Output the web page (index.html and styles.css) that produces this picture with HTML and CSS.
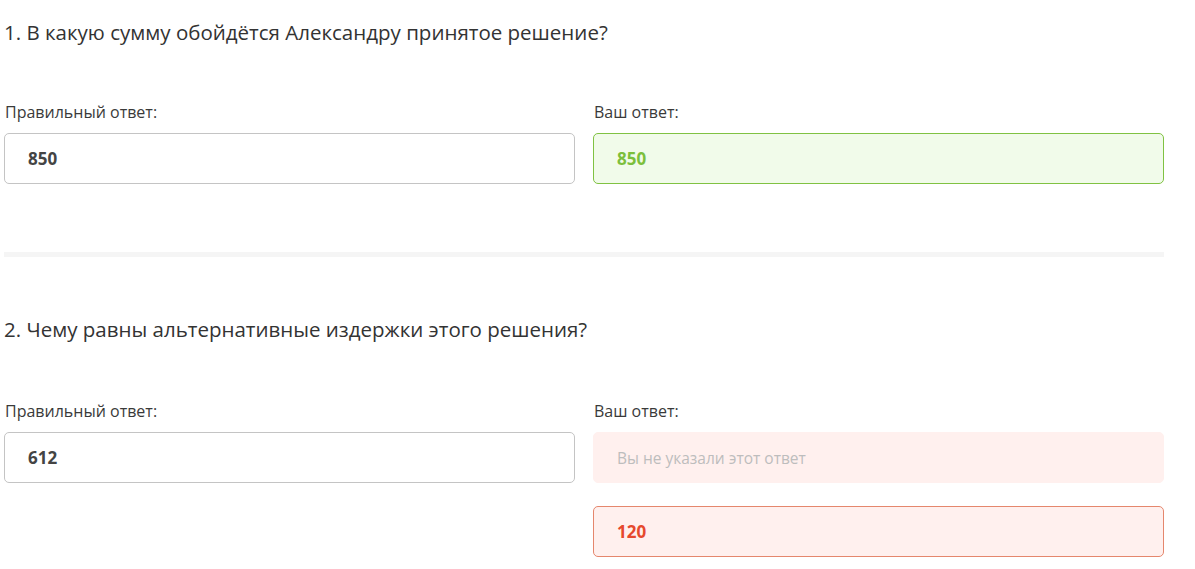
FILE: index.html
```html
<!DOCTYPE html>
<html lang="ru">
<head>
<meta charset="utf-8">
<title>Результаты</title>
<link rel="stylesheet" href="styles.css">
</head>
<body>
<div class="results">
  <section class="question">
    <h2 class="question-title">1. В какую сумму обойдётся Александру принятое решение?</h2>
    <div class="answers">
      <div class="answer-col">
        <div class="answer-label">Правильный ответ:</div>
        <div class="answer-box">850</div>
      </div>
      <div class="answer-col">
        <div class="answer-label">Ваш ответ:</div>
        <div class="answer-box is-correct">850</div>
      </div>
    </div>
  </section>
  <div class="divider"></div>
  <section class="question">
    <h2 class="question-title">2. Чему равны альтернативные издержки этого решения?</h2>
    <div class="answers">
      <div class="answer-col">
        <div class="answer-label">Правильный ответ:</div>
        <div class="answer-box">612</div>
      </div>
      <div class="answer-col">
        <div class="answer-label">Ваш ответ:</div>
        <div class="answer-box is-missing">Вы не указали этот ответ</div>
        <div class="answer-box is-wrong">120</div>
      </div>
    </div>
  </section>
</div>
</body>
</html>
```
FILE: styles.css
```css
html, body {
  margin: 0;
  padding: 0;
  background: #ffffff;
}

body {
  font-family: "Open Sans", "Lato", sans-serif;
  color: #333333;
}

.results {
  width: 1160px;
  margin-left: 4px;
}

.question {
  padding-top: 18px;
}

.question + .divider + .question {
  padding-top: 58px;
}

.question-title {
  margin: 0;
  font-size: 20.5px;
  font-weight: 400;
  line-height: 28px;
  color: #333333;
}

.answers {
  display: grid;
  grid-template-columns: 1fr 1fr;
  column-gap: 18px;
  margin-top: 57px;
  padding-bottom: 68px;
}

.question + .divider + .question .answers {
  margin-top: 59px;
  padding-bottom: 0;
}

.answer-col {
  display: flex;
  flex-direction: column;
}

.answer-label {
  font-size: 16px;
  line-height: 18px;
  color: #3a3a3a;
  margin-bottom: 12px;
  padding-left: 1px;
}

.answer-box {
  box-sizing: border-box;
  height: 51px;
  border: 1px solid #c4c4c4;
  border-radius: 5px;
  padding: 0 23px;
  display: flex;
  align-items: center;
  font-size: 17px;
  font-weight: 700;
  color: #444444;
}

.answer-box + .answer-box {
  margin-top: 23px;
}

.answer-box.is-correct {
  background: #f1fbea;
  border-color: #80c242;
  color: #7cbf3c;
}

.answer-box.is-missing {
  background: #fff0ee;
  border-color: #fff0ee;
  color: #bdbdbd;
  font-size: 15.5px;
  font-weight: 400;
}

.answer-box.is-wrong {
  background: #fff0ee;
  border-color: #e5876d;
  color: #e6492d;
}

.divider {
  height: 5px;
  background: #f5f5f5;
}
```
